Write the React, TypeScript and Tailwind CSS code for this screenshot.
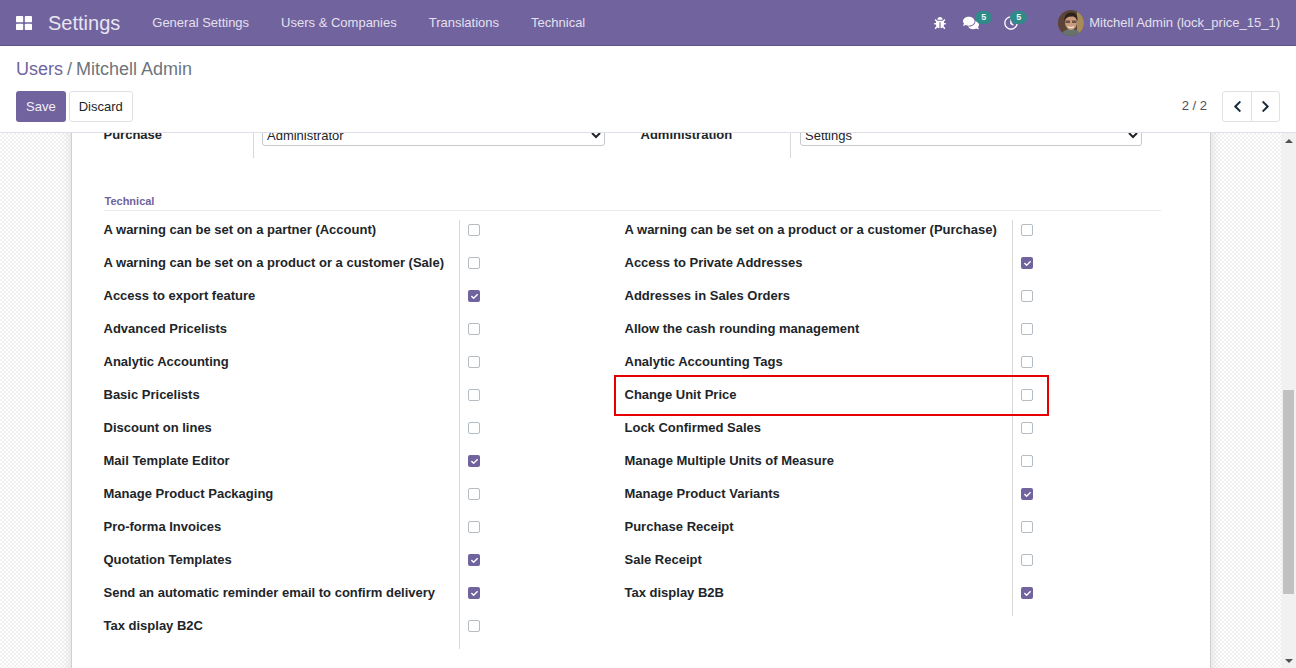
import { FaBug, FaComments, FaRegClock, FaChevronLeft, FaChevronRight, FaCheck } from 'react-icons/fa';

const navLinks = ['General Settings', 'Users & Companies', 'Translations', 'Technical'];

const leftRows: [string, boolean][] = [
  ['A warning can be set on a partner (Account)', false],
  ['A warning can be set on a product or a customer (Sale)', false],
  ['Access to export feature', true],
  ['Advanced Pricelists', false],
  ['Analytic Accounting', false],
  ['Basic Pricelists', false],
  ['Discount on lines', false],
  ['Mail Template Editor', true],
  ['Manage Product Packaging', false],
  ['Pro-forma Invoices', false],
  ['Quotation Templates', true],
  ['Send an automatic reminder email to confirm delivery', true],
  ['Tax display B2C', false],
];

const rightRows: [string, boolean][] = [
  ['A warning can be set on a product or a customer (Purchase)', false],
  ['Access to Private Addresses', true],
  ['Addresses in Sales Orders', false],
  ['Allow the cash rounding management', false],
  ['Analytic Accounting Tags', false],
  ['Change Unit Price', false],
  ['Lock Confirmed Sales', false],
  ['Manage Multiple Units of Measure', false],
  ['Manage Product Variants', true],
  ['Purchase Receipt', false],
  ['Sale Receipt', false],
  ['Tax display B2B', true],
];

function Checkbox({ checked }: { checked: boolean }) {
  if (checked) {
    return (
      <span className="flex h-3 w-3 items-center justify-center rounded-[2px] bg-[#71639e] text-white">
        <FaCheck className="h-[7px] w-[7px]" />
      </span>
    );
  }
  return <span className="block h-3 w-3 rounded-[2px] border border-[#b4bcc4] bg-white" />;
}

function BoolRow({ label, checked, width }: { label: string; checked: boolean; width: string }) {
  return (
    <div className="flex h-[33px]">
      <div className={`${width} pt-[3px] text-[13px] font-bold leading-[14px] text-[#212529]`}>{label}</div>
      <div className="w-[1px] bg-[#d8d8d8]" />
      <div className="pl-2 pt-[4px]">
        <Checkbox checked={checked} />
      </div>
    </div>
  );
}

function Avatar() {
  return (
    <svg viewBox="0 0 26 26" className="h-[26px] w-[26px]">
      <defs>
        <clipPath id="av">
          <circle cx="13" cy="13" r="13" />
        </clipPath>
      </defs>
      <g clipPath="url(#av)">
        <rect width="26" height="26" fill="#5c4436" />
        <rect x="19" width="7" height="26" fill="#a88b5a" />
        <path d="M3 26c1-5 5-7 10-7s9 2 10 7z" fill="#66736b" />
        <ellipse cx="13" cy="12.500" rx="6" ry="7.500" fill="#c99b7c" />
        <path d="M6.500 11c-.5-6 3-8.500 7-8.500s6.500 3 6 8.500c-1-3-2-4.500-6-4.500s-6 1.500-7 4.500z" fill="#2e211a" />
        <path d="M7.500 10.500h4.500v2.500H7.500zM14 10.500h4.500v2.500H14z" fill="#4a3a30" opacity=".75" />
        <path d="M10 16.500c2 1.500 4 1.500 6 0" stroke="#f4e6da" strokeWidth="1.200" fill="none" />
      </g>
    </svg>
  );
}

export default function App() {
  return (
    <div className="flex h-[668px] w-[1296px] flex-col overflow-hidden bg-white font-['Liberation_Sans',Arial,sans-serif] text-[13px] text-[#212529]">
      {/* Navbar */}
      <header className="flex h-[46px] shrink-0 items-center border-b border-[#5f5289] bg-[#71639e] text-[#e4e0ee]">
        <svg viewBox="0 0 16 16" preserveAspectRatio="none" className="ml-4 h-[14px] w-4" fill="#fff">
          <rect x="0" y="0" width="7.200" height="7.200" rx="1" />
          <rect x="8.800" y="0" width="7.200" height="7.200" rx="1" />
          <rect x="0" y="8.800" width="7.200" height="7.200" rx="1" />
          <rect x="8.800" y="8.800" width="7.200" height="7.200" rx="1" />
        </svg>
        <span className="ml-4 text-[20px] text-[#e8e5f0]">Settings</span>
        <nav className="ml-[32px] flex gap-8">
          {navLinks.map((l) => (
            <span key={l}>{l}</span>
          ))}
        </nav>
        <div className="ml-auto flex items-center pr-4">
          <FaBug className="mr-[17px] mt-[1px] h-3 w-3 text-white" />
          <span className="relative mr-[25px] mt-[1px]">
            <FaComments className="h-4 w-4 text-white" />
            <span className="absolute -top-[4px] left-[12px] h-[13px] rounded-[7px] bg-[#2f8a89] px-[6px] text-[9px] font-bold leading-[13px] text-[#eef6f6]">
              5
            </span>
          </span>
          <span className="relative mr-[40px] mt-[1px]">
            <FaRegClock className="h-[14px] w-[14px] text-white" />
            <span className="absolute -top-[5px] left-[6px] h-[13px] rounded-[7px] bg-[#2f8a89] px-[6px] text-[9px] font-bold leading-[13px] text-[#eef6f6]">
              5
            </span>
          </span>
          <Avatar />
          <span className="ml-[5px]">Mitchell Admin (lock_price_15_1)</span>
        </div>
      </header>

      {/* Control panel */}
      <div className="z-10 h-[87px] shrink-0 border-b border-[#dfdfe8] bg-white px-4">
        <div className="flex h-[45px] items-start pt-[11px] text-[18px] leading-[24px]">
          <span className="text-[#71639e]">Users</span>
          <span className="mx-[4px] text-[#6c757d]">/</span>
          <span className="text-[#6c757d]">Mitchell Admin</span>
        </div>
        <div className="flex items-center">
          <button className="h-[31px] rounded-[3px] bg-[#71639e] px-[10px] text-[#f1eff6]">Save</button>
          <button className="ml-[3px] h-[31px] rounded-[3px] border border-[#dee2e6] bg-white px-[9px] text-[#212529]">Discard</button>
          <span className="ml-auto -mt-[2px] text-[#495057]">2 / 2</span>
          <div className="ml-[15px] flex h-[31px] rounded-[3px] border border-[#dee2e6]">
            <span className="flex w-[29px] items-center justify-center border-r border-[#dee2e6]">
              <FaChevronLeft className="h-[13px] w-[13px] text-[#1a2b3c]" />
            </span>
            <span className="flex w-[27px] items-center justify-center">
              <FaChevronRight className="h-[13px] w-[13px] text-[#1a2b3c]" />
            </span>
          </div>
        </div>
      </div>

      {/* Content */}
      <div className="flex min-h-0 flex-1">
        <div className="min-w-0 flex-1 overflow-hidden bg-[#fdfdfd] bg-[repeating-conic-gradient(#f1f1f1_0_25%,#ffffff_0_50%)] bg-[length:4px_4px]">
          <div className="relative -mt-[21px] ml-[71px] h-[700px] w-[1140px] border-x border-[#cfd0d6] bg-white pl-[31.5px] shadow-[0_0_12px_rgba(0,0,0,0.12)]">
            <div className="flex h-[46px]">
              <div className="flex">
                <div className="w-[149.5px] pt-[16px] font-bold leading-[14px]">Purchase</div>
                <div className="w-[1px] bg-[#d8d8d8]" />
                <div className="pl-2 pt-[13px]">
                  <select className="h-[21px] w-[343px] rounded-[3px] border border-[#c6c9ce] leading-[14px]">
                    <option>Administrator</option>
                  </select>
                </div>
              </div>
              <div className="ml-[35.5px] flex">
                <div className="w-[149.5px] pt-[16px] font-bold leading-[14px]">Administration</div>
                <div className="w-[1px] bg-[#d8d8d8]" />
                <div className="pl-[9px] pt-[13px]">
                  <select className="h-[21px] w-[342px] rounded-[3px] border border-[#c6c9ce] leading-[14px]">
                    <option>Settings</option>
                  </select>
                </div>
              </div>
            </div>
            <div className="mt-[36px] h-[17px] w-[1057px] border-b border-[#e9ecef] pt-[1px] text-[11px] font-bold leading-[13px] text-[#71639e]">
              <span className="pl-[1px]">Technical</span>
            </div>
            <div className="mt-[9px] flex">
              <div className="w-[521px]">
                {leftRows.map(([label, checked]) => (
                  <BoolRow key={label} label={label} checked={checked} width="w-[355.5px]" />
                ))}
              </div>
              <div>
                {rightRows.map(([label, checked]) => (
                  <BoolRow key={label} label={label} checked={checked} width="w-[387.5px]" />
                ))}
              </div>
            </div>
            {/* annotation from the screenshot */}
            <div className="absolute left-[542px] top-[263px] h-[41px] w-[435px] border-2 border-[#e60000]" />
          </div>
        </div>
        {/* Scrollbar */}
        <div className="flex w-[15px] shrink-0 flex-col bg-[#f1f1f1] pl-[2px] pr-[2px]">
          <div className="flex h-[257px] justify-center pt-[6px]">
            <div className="h-0 w-0 border-x-[4px] border-b-[4px] border-x-transparent border-b-[#505050]" />
          </div>
          <div className="h-[204px] w-[11px] bg-[#c1c1c1]" />
          <div className="flex flex-1 items-end justify-center pb-[5px]">
            <div className="h-0 w-0 border-x-[4px] border-t-[4px] border-x-transparent border-t-[#505050]" />
          </div>
        </div>
      </div>
    </div>
  );
}
